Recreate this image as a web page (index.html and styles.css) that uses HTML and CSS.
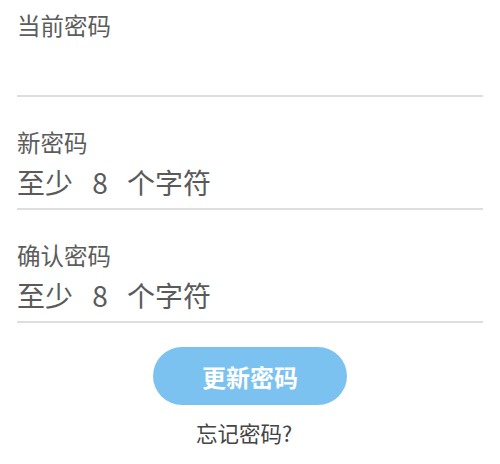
FILE: index.html
```html
<!DOCTYPE html>
<html lang="zh-CN">
<head>
<meta charset="utf-8">
<title>修改密码</title>
<link rel="stylesheet" href="styles.css">
</head>
<body>
<form class="form">
  <div class="field field-first">
    <div class="label">当前密码</div>
    <div class="input"></div>
  </div>
  <div class="field">
    <div class="label">新密码</div>
    <div class="input placeholder">至少 8 个字符</div>
  </div>
  <div class="field">
    <div class="label">确认密码</div>
    <div class="input placeholder">至少 8 个字符</div>
  </div>
  <div class="actions">
    <button type="button" class="btn">更新密码</button>
    <a class="forgot">忘记密码?</a>
  </div>
</form>
</body>
</html>
```
FILE: styles.css
```css
html, body {
  margin: 0;
  padding: 0;
  background: #ffffff;
}
body {
  font-family: "Noto Sans CJK SC", "Noto Sans", sans-serif;
  color: #555555;
}
.form {
  display: flex;
  flex-direction: column;
  padding: 0 17px;
}
.field {
  display: flex;
  flex-direction: column;
  padding: 31px 0 8px 0;
  border-bottom: 2px solid #dedede;
}
.field-first {
  padding-top: 11px;
  padding-bottom: 12px;
}
.label {
  font-size: 23.5px;
  line-height: 28px;
  font-weight: 400;
  color: #5c5c5c;
}
.input {
  height: 36px;
  margin-top: 8px;
  font-size: 28px;
  line-height: 36px;
  font-weight: 400;
  color: #5a5a5a;
}
.placeholder {
  word-spacing: 13px;
}
.actions {
  display: flex;
  flex-direction: column;
  align-items: center;
  padding-top: 24px;
}
.btn {
  width: 194px;
  height: 58px;
  border: none;
  border-radius: 29px;
  background: #7bc2f1;
  color: #ffffff;
  font-family: "Noto Sans CJK SC", sans-serif;
  font-size: 24px;
  font-weight: 700;
  padding: 0;
}
.forgot {
  margin-top: 14px;
  font-size: 21.5px;
  line-height: 28px;
  font-weight: 400;
  color: #444444;
  padding-right: 12px;
}
```
